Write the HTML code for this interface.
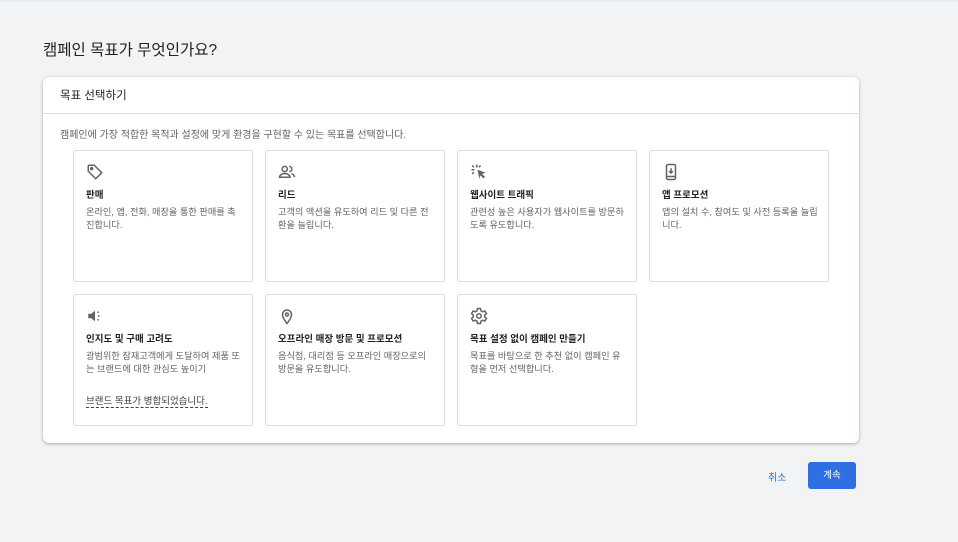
<!DOCTYPE html>
<html><head><meta charset="utf-8"><style>
*{box-sizing:border-box;margin:0;padding:0}
body{width:958px;height:542px;background:#f1f3f4;font-family:"Liberation Sans","Noto Sans CJK KR",sans-serif;color:#202124;position:relative;overflow:hidden}
.top{position:absolute;left:0;top:0;width:958px;height:2px;background:#e8edf5}
h1{position:absolute;left:43px;top:38px;font-size:15.5px;font-weight:400;color:#202124}
.card{position:absolute;left:43px;top:77px;width:816px;height:366px;background:#fff;border-radius:6px;box-shadow:0 1px 3px rgba(0,0,0,.3)}
.hd{height:37px;border-bottom:1px solid #dadce0;padding:10px 0 0 17px;font-size:11.5px;color:#202124}
.desc{position:absolute;left:17px;top:49px;font-size:10px;color:#5f6368}
.t{position:absolute;width:180px;height:132px;border:1px solid #dadce0;border-radius:2px;padding:12px 10px 12px 12px}
.t svg{width:18px;height:18px;display:block}
.t b{display:block;font-size:9.5px;font-weight:700;margin-top:6px;color:#202124}
.t p{font-size:9.2px;color:#5f6368;line-height:13px;margin-top:5px;word-break:break-all;line-break:anywhere}
.t u{position:absolute;left:12px;top:98px;font-size:9.5px;color:#3c4043;text-decoration:none;border-bottom:1px dashed #3c4043}
.cancel{position:absolute;left:768px;top:469px;font-size:10px;color:#1a73e8}
.btn{position:absolute;left:808px;top:462px;width:48px;height:27px;background:#2f6fe4;border-radius:3px;color:#fff;font-size:9.5px;text-align:center;line-height:27px}
</style></head><body>
<div class="top"></div>
<h1>캠페인 목표가 무엇인가요?</h1>
<div class="card">
<div class="hd">목표 선택하기</div>
<div class="desc">캠페인에 가장 적합한 목적과 설정에 맞게 환경을 구현할 수 있는 목표를 선택합니다.</div>
</div>
<div class="t" style="left:73px;top:150px"><svg viewBox="0 0 24 24" fill="none" stroke="#5f6368" stroke-width="2"><path d="M3 4v7l10 10 8-8L11 3H4z"/><circle cx="7.5" cy="7.5" r="1.3" fill="#5f6368"/></svg><b>판매</b><p>온라인, 앱, 전화, 매장을 통한 판매를 촉진합니다.</p></div>
<div class="t" style="left:265px;top:150px"><svg viewBox="0 0 24 24" fill="none" stroke="#5f6368" stroke-width="2"><circle cx="9" cy="8" r="3.5"/><path d="M2 19c0-3 4-5 7-5s7 2 7 5z"/><path d="M15 4.5a3.5 3.5 0 010 7M18 14c2 1 4 2.5 4 5"/></svg><b>리드</b><p>고객의 액션을 유도하여 리드 및 다른 전환을 늘립니다.</p></div>
<div class="t" style="left:457px;top:150px"><svg viewBox="0 0 24 24" fill="#5f6368"><path d="M10 9l11 4-5 1.5 4 4-2 2-4-4L12.5 21z"/><rect x="8" y="2" width="2" height="4"/><rect x="2" y="8" width="4" height="2"/><rect x="3" y="3" width="2" height="3" transform="rotate(-45 4 4.5)"/><rect x="12" y="3" width="2" height="3" transform="rotate(45 13 4.5)"/><rect x="3" y="12" width="2" height="3" transform="rotate(45 4 13.5)"/></svg><b>웹사이트 트래픽</b><p>관련성 높은 사용자가 웹사이트를 방문하도록 유도합니다.</p></div>
<div class="t" style="left:649px;top:150px"><svg viewBox="0 0 24 24" fill="none" stroke="#5f6368" stroke-width="2"><rect x="6" y="2" width="12" height="20" rx="2"/><path d="M6 18h12M12 7v6M9.5 11l2.5 2.5 2.5-2.5"/></svg><b>앱 프로모션</b><p>앱의 설치 수, 참여도 및 사전 등록을 늘립니다.</p></div>
<div class="t" style="left:73px;top:294px"><svg viewBox="0 0 24 24" fill="#5f6368"><path d="M3 9h4l5-4v14l-5-4H3z"/><rect x="15" y="6" width="2" height="2"/><rect x="16" y="11" width="2" height="2"/><rect x="15" y="16" width="2" height="2"/></svg><b>인지도 및 구매 고려도</b><p>광범위한 잠재고객에게 도달하여 제품 또는 브랜드에 대한 관심도 높이기</p><u>브랜드 목표가 병합되었습니다.</u></div>
<div class="t" style="left:265px;top:294px"><svg viewBox="0 0 24 24" fill="none" stroke="#5f6368" stroke-width="2"><path d="M12 22s-6-7-6-12a6 6 0 0112 0c0 5-6 12-6 12z"/><circle cx="12" cy="10" r="2"/></svg><b>오프라인 매장 방문 및 프로모션</b><p>음식점, 대리점 등 오프라인 매장으로의 방문을 유도합니다.</p></div>
<div class="t" style="left:457px;top:294px"><svg viewBox="0 0 24 24" fill="none" stroke="#5f6368" stroke-width="2"><circle cx="12" cy="12" r="3"/><path d="M10 2h4l.6 3 2.4 1.4 2.9-1 2 3.4-2.3 2v2.4l2.3 2-2 3.4-2.9-1L14.6 19l-.6 3h-4l-.6-3L7 17.6l-2.9 1-2-3.4 2.3-2v-2.4l-2.3-2 2-3.4 2.9 1L9.4 5z"/></svg><b>목표 설정 없이 캠페인 만들기</b><p>목표를 바탕으로 한 추천 없이 캠페인 유형을 먼저 선택합니다.</p></div>
<div class="cancel">취소</div>
<div class="btn">계속</div>
</body></html>
